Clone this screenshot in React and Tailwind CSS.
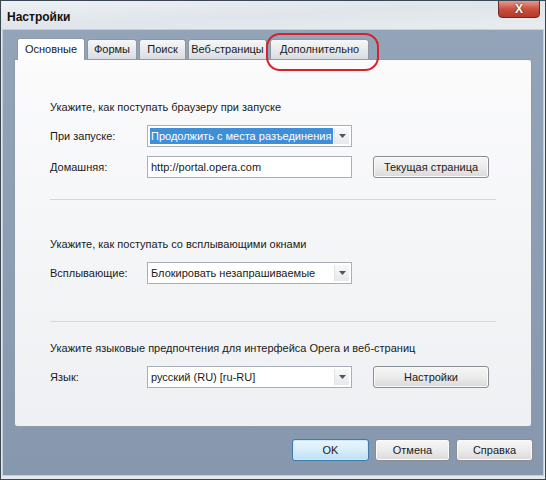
import React from "react";

const font = { fontFamily: '"Liberation Sans", Arial, sans-serif' };

function Arrow() {
  return (
    <svg width="7" height="4" viewBox="0 0 7 4">
      <path d="M0 0 L7 0 L3.5 4 Z" fill="#4d5560" />
    </svg>
  );
}

function Combo({ value, selected }) {
  return (
    <div className="w-[205px] h-[22px] border border-[#a9afb8] bg-white flex items-stretch p-[2px]">
      <div
        className={
          "flex-1 flex items-center pl-[1px] whitespace-nowrap text-[11px] " +
          (selected ? "bg-[#3f8fd8] text-white" : "text-[#1a1a1a]")
        }
      >
        {value}
      </div>
      <div className="w-[15px] ml-[1px] border-l border-[#e0e3e7] bg-gradient-to-b from-[#f7f8f9] to-[#e6e9ec] flex items-center justify-center">
        <Arrow />
      </div>
    </div>
  );
}

function Btn({ children, w, primary }) {
  return (
    <div
      className={
        "h-[22px] rounded-[3px] border flex items-center justify-center whitespace-nowrap text-[11px] text-[#1a1a1a] " +
        (primary
          ? "border-[#3d7bad] bg-gradient-to-b from-[#eaf5fc] via-[#d9eefb] to-[#bcdff5] shadow-[inset_0_0_0_1px_#c9ecfc]"
          : "border-[#8a8e94] bg-gradient-to-b from-[#f6f6f6] via-[#ececec] to-[#d9d9d9] shadow-[inset_0_0_0_1px_#fbfbfb]")
      }
      style={{ width: w }}
    >
      {children}
    </div>
  );
}

function Tab({ label, w, active }) {
  return (
    <div
      className={
        "flex items-center justify-center whitespace-nowrap text-[11px] text-[#1a1a1a] border border-b-0 rounded-t-[3px] " +
        (active
          ? "h-[22px] bg-white border-[#8f9aa6] relative z-10 -mb-[1px]"
          : "h-[20px] bg-gradient-to-b from-[#f6f7f8] to-[#d9dde2] border-[#8e98a4]")
      }
      style={{ width: w }}
    >
      {label}
    </div>
  );
}

export default function App() {
  return (
    <div
      className="w-[546px] h-[480px] bg-[#e4e9ee] border border-[#3b4654] flex flex-col relative overflow-hidden"
      style={font}
    >
      {/* Title bar */}
      <div className="h-[28px] flex items-center pl-[6px] bg-gradient-to-br from-[#eef1f4] via-[#dfe5ea] to-[#e9edf0] relative">
        <span className="text-[12px] font-bold text-[#111] mt-[4px]">Настройки</span>
        <div className="absolute top-[-1px] right-[5px] w-[42px] h-[18px] rounded-b-[4px] border border-[#6b2a24] bg-gradient-to-b from-[#e39a8c] via-[#c9503f] to-[#b23a2a] flex items-center justify-center">
          <span className="text-white font-bold text-[12px] leading-none" style={{ textShadow: "0 0 2px #4a1510" }}>
            X
          </span>
        </div>
      </div>

      {/* Body */}
      <div className="flex-1 mx-[1px] mb-[3px] border border-[#c6cfd8] bg-gradient-to-b from-[#93a3b8] to-[#8797ad] flex flex-col pl-[11px] pr-[10px] relative">
        {/* Tabs */}
        <div className="flex items-end gap-[2px] pl-[3px] mt-[8px] h-[21px]">
          <Tab label="Основные" w={68} active />
          <Tab label="Формы" w={50} />
          <Tab label="Поиск" w={47} />
          <Tab label="Веб-страницы" w={79} />
          <div className="ml-[1px]">
            <Tab label="Дополнительно" w={99} />
          </div>
        </div>

        {/* Panel */}
        <div className="h-[368px] w-[518px] border border-[#8f9aa6] rounded-[3px] rounded-tl-none bg-gradient-to-b from-[#fbfbfc] to-[#eef0f3] px-[35px] flex flex-col whitespace-nowrap text-[11px] text-[#1a1a1a]">
          <div className="mt-[39px] h-[16px] leading-[16px]">Укажите, как поступать браузеру при запуске</div>
          <div className="mt-[10px] flex items-center">
            <div className="w-[97px]">При запуске:</div>
            <Combo value="Продолжить с места разъединения" selected />
          </div>
          <div className="mt-[9px] flex items-center">
            <div className="w-[97px]">Домашняя:</div>
            <div className="w-[205px] h-[22px] border border-[#a9afb8] bg-white flex items-center pl-[3px]">
              http://portal.opera.com
            </div>
            <div className="ml-[21px]">
              <Btn w={116}>Текущая страница</Btn>
            </div>
          </div>
          <div className="mt-[21px] h-[1px] bg-[#d4d8dd]" />

          <div className="mt-[36px] h-[16px] leading-[16px]">Укажите, как поступать со всплывающими окнами</div>
          <div className="mt-[10px] flex items-center">
            <div className="w-[97px]">Всплывающие:</div>
            <Combo value="Блокировать незапрашиваемые" />
          </div>
          <div className="mt-[37px] h-[1px] bg-[#d4d8dd]" />

          <div className="mt-[18px] h-[16px] leading-[16px]">
            Укажите языковые предпочтения для интерфейса Opera и веб-страниц
          </div>
          <div className="mt-[10px] flex items-center">
            <div className="w-[97px]">Язык:</div>
            <Combo value="русский (RU) [ru-RU]" />
            <div className="ml-[21px]">
              <Btn w={116}>Настройки</Btn>
            </div>
          </div>
        </div>

        {/* Buttons */}
        <div className="mt-[12px] flex justify-end gap-[6px]">
          <Btn w={77} primary>OK</Btn>
          <Btn w={75}>Отмена</Btn>
          <Btn w={77}>Справка</Btn>
        </div>

        {/* Red highlight */}
        <div className="absolute left-[263px] top-[3px] w-[113px] h-[38px] rounded-[14px] border-[2.5px] border-[#d6222b]" />
      </div>
    </div>
  );
}
